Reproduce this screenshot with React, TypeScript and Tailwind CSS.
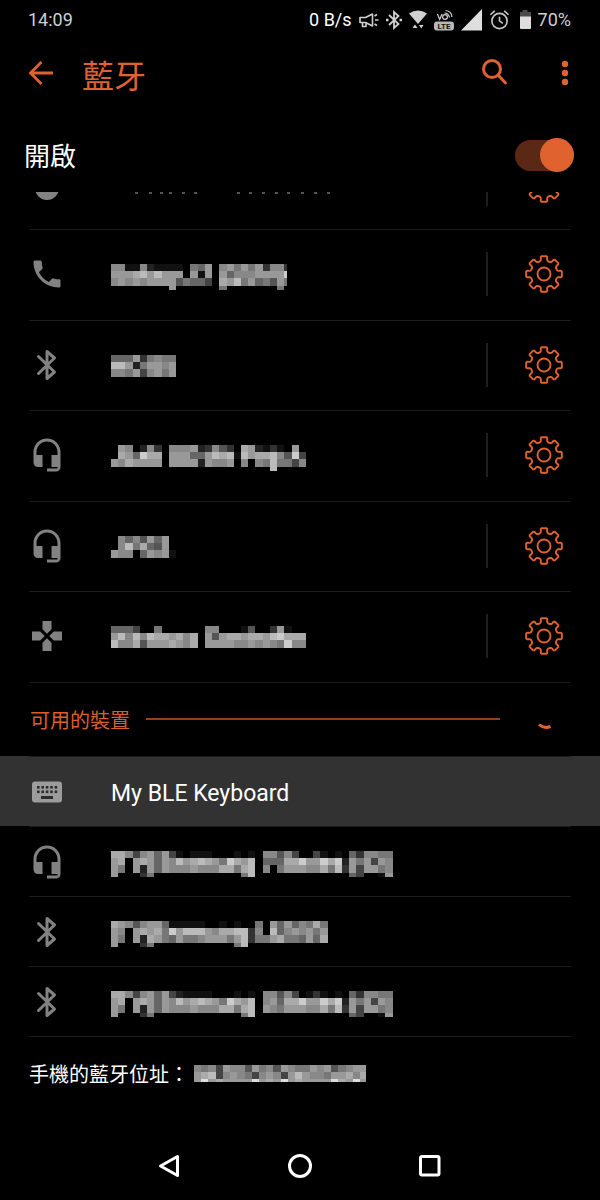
import React, { useState } from "react";

type IconName = "phone" | "bluetooth" | "headset" | "gamepad" | "keyboard";

interface Device {
  id: string;
  icon: IconName;
  name?: string;
  // rows of grey levels (hex digits), one digit for each mosaic block
  mosaic?: string[];
  width?: number;
}

const BLOCK = 7.22;

const pairedDevices: Device[] = [
  {
    id: "p1",
    icon: "phone",
    width: 176,
    mosaic: [
      "8811821111076908979793883",
      "999ab9b99909190968889999c",
      "898989999576640a9b7967597",
      "000000009000000700000007",
    ],
  },
  {
    id: "p2",
    icon: "bluetooth",
    width: 66,
    mosaic: ["666937877", "bb9279989", "887948979"],
  },
  {
    id: "p3",
    icon: "headset",
    width: 195,
    mosaic: [
      "098028308889238530a92131090",
      "0a96caa0999669bab1b9aab85c4",
      "98a9999099992988908087b7748",
      "0000000000000000000000b",
    ],
  },
  {
    id: "p4",
    icon: "headset",
    width: 66,
    mosaic: ["08685969", "08b7a659", "988069891"],
  },
  {
    id: "p5",
    icon: "gamepad",
    width: 195,
    mosaic: [
      "666400700000088000150039100",
      "9b8b8baa9a8a0959aa9aa9bcaaa",
      "b88a5999a98a099998898987c88",
    ],
  },
];

const tvName = [
  "aa8489694101110001010885840041010638877",
  "9a09a9698b9aba97ca9b0666aac99cac2979498",
  "970929698889888aa7ab080799988a7b3949978",
  "9000370000000000007b0000000000000640019",
];

const availableDevices: Device[] = [
  { id: "a1", icon: "keyboard", name: "My BLE Keyboard" },
  { id: "a2", icon: "headset", width: 282, mosaic: tvName },
  {
    id: "a3",
    icon: "bluetooth",
    width: 217,
    mosaic: [
      "a985899611111001010070969687a7",
      "9809a9a7c9bbb98aabb380b6898979",
      "97092a976977899979b3779a77696a",
      "900037000000000007b",
    ],
  },
  {
    id: "a4",
    icon: "bluetooth",
    width: 282,
    mosaic: [
      "aa8489694211110001010885840131010638877",
      "9a09a9698b9aba97ca9b0896aac99cac2979498",
      "970929698889888aa7ab098799988a7b3949978",
      "9000370000000000007b0000000000000640019",
    ],
  },
];

const addressMosaic = [
  "878498859785987798957899",
  "9ab48987489849b988799a8a",
  "9d9a9999d9a9d9a9999da9d9",
];

interface MosaicProps {
  rows: string[];
  width: number;
  height: number;
  label: string;
}

function Mosaic({ rows, width, height, label }: MosaicProps) {
  return (
    <svg width={width} height={height} role="img" aria-label={label} shapeRendering="crispEdges" className="block">
      {rows.map((row, y) =>
        row.split("").map((level, x) =>
          level === "0" ? null : (
            <rect
              key={`${x}-${y}`}
              x={x * BLOCK}
              y={y * BLOCK}
              width={BLOCK}
              height={BLOCK}
              fill={`#${level.repeat(6)}`}
            />
          )
        )
      )}
    </svg>
  );
}

function DeviceMosaic({ device, label }: { device: Device; label: string }) {
  const rows = device.mosaic ?? [];
  // the fourth row holds only the descenders
  return <Mosaic rows={rows} width={device.width ?? 0} height={rows.length > 3 ? 26 : 22} label={label} />;
}

function DeviceIcon({ name }: { name: IconName }) {
  if (name === "bluetooth") {
    return (
      <svg viewBox="0 0 36 36" className="size-9 shrink-0" fill="none" stroke="#828282" strokeWidth="3" strokeLinecap="round" strokeLinejoin="round">
        <path d="M9.5 9.5 25.5 25l-7.5 6.500v-27l7.500 6.500L9.5 26.500" />
      </svg>
    );
  }
  if (name === "keyboard") {
    return (
      <svg viewBox="0 0 36 36" className="size-9 shrink-0">
        <rect x="3" y="7.5" width="30" height="21" rx="3" fill="#9c9c9c" />
        <g fill="#2c2c2c">
          {[8, 12.4, 16.8, 21.2, 25.6].map((x) => (
            <g key={x}>
              <rect x={x} y="12" width="2.6" height="2.6" />
              <rect x={x} y="16.5" width="2.6" height="2.6" />
            </g>
          ))}
          <rect x="12" y="22" width="12" height="3" />
        </g>
      </svg>
    );
  }
  const paths = {
    phone:
      "M6.62 10.79c1.44 2.83 3.76 5.14 6.59 6.59l2.2-2.2c.27-.27.67-.36 1.02-.24 1.12.37 2.33.57 3.57.57.55 0 1 .45 1 1V20c0 .55-.45 1-1 1-9.39 0-17-7.61-17-17 0-.55.45-1 1-1h3.5c.55 0 1 .45 1 1 0 1.25.2 2.45.57 3.57.11.35.03.74-.25 1.02l-2.2 2.2z",
    headset:
      "M12 1c-4.97 0-9 4.03-9 9v7c0 1.66 1.34 3 3 3h3v-8H5v-2c0-3.87 3.13-7 7-7s7 3.13 7 7v2h-4v8h4v1h-7v2h6c1.66 0 3-1.34 3-3V10c0-4.97-4.03-9-9-9z",
    gamepad:
      "M15 7.5V2H9v5.5l3 3 3-3zM7.5 9H2v6h5.5l3-3-3-3zM9 16.5V22h6v-5.5l-3-3-3 3zM16.5 9l-3 3 3 3H22V9h-5.5z",
  };
  return (
    <svg viewBox="0 0 24 24" className="size-9 shrink-0" fill="#828282">
      <path d={paths[name]} />
    </svg>
  );
}

// eight teeth: root, tip, tip, root
const gearPoints = Array.from({ length: 8 })
  .flatMap((_, i) =>
    [
      [-18, 13.4],
      [-14, 14],
      [-12, 15],
      [-11, 17.2],
      [-8, 18],
      [8, 18],
      [11, 17.2],
      [12, 15],
      [14, 14],
      [18, 13.4],
    ].map(([offset, radius]) => {
      const angle = ((i * 45 + offset) * Math.PI) / 180;
      return `${(20 + radius * Math.sin(angle)).toFixed(2)},${(20 - radius * Math.cos(angle)).toFixed(2)}`;
    })
  )
  .join(" ");

function SettingsButton() {
  return (
    <div className="flex items-center">
      <div className="h-11 w-0.5 bg-[#1f1f1f]" />
      <button aria-label="裝置設定" className="ml-9 mr-[7px]">
        <svg viewBox="0 0 40 40" className="block size-10" fill="none" stroke="#e0622f" strokeWidth="1.9" strokeLinejoin="round">
          <polygon points={gearPoints} />
          <circle cx="20" cy="20" r="6.5" />
        </svg>
      </button>
    </div>
  );
}

function StatusIcons() {
  return (
    <>
      <svg width="20" height="20" viewBox="0 0 20 20" fill="none" stroke="#d0d0d0" strokeWidth="1.6" strokeLinejoin="round">
        <path d="M1 7.5h5.5L13.500 4v12L6.500 12.500H1zM3.500 12.500V16.500h3.500v-4M15.500 6l2.500-1.500M16 10h3.500M15.500 14l2.500 1.500" />
      </svg>
      <svg width="16" height="20" viewBox="0 0 16 20" fill="none" stroke="#d0d0d0" strokeWidth="1.800">
        <path d="M3 5 12.500 14 8 18V2l4.500 4L3 15" />
        <path d="M0 10h2.500M13.500 10H16" strokeWidth="2.400" />
      </svg>
      <svg width="18" height="20" viewBox="0 0 18 20" fill="#d0d0d0">
        <path d="M0 3.500Q9-2.500 18 3.500L9 14zM3.500 18l2.500-3.500 2.500 3.500zM10 15h4.500l-2.200 3.500z" />
      </svg>
      <svg width="20" height="22" viewBox="0 0 20 22" fill="none" stroke="#d0d0d0" strokeWidth="1.200">
        <path d="m3.500 5 2.200 5.500L8 5" />
        <circle cx="11" cy="8" r="2.400" />
        <path d="M10.500 4q4 0 5 4.500M11.500 1.500q6 .5 6.500 6.500" />
        <rect x="0" y="12.500" width="20" height="9" rx="3" fill="#b8b8b8" stroke="none" />
        <text x="10" y="20" textAnchor="middle" fontSize="8" fontWeight="700" fill="#111" stroke="none">
          LTE
        </text>
      </svg>
      <svg width="21" height="22" viewBox="0 0 21 22" fill="#dedede">
        <path d="M21 0v21.500H0z" />
      </svg>
      <svg width="21" height="22" viewBox="0 0 22 22" fill="none" stroke="#c8c8c8" strokeWidth="1.700">
        <circle cx="11" cy="12" r="8" />
        <path d="M11 7.500V12l3.500 2.500M1.500 5.500 6 1.500M20.500 5.500 16 1.500" />
      </svg>
      <svg width="14" height="20" viewBox="0 0 14 20">
        <path d="M5.500 0h5v2H14v5H3V2h2.500z" fill="#4a4a4a" />
        <path d="M3 6.500h11V18q0 1-1 1H4q-1 0-1-1z" fill="#dedede" />
      </svg>
    </>
  );
}

const App: React.FC = () => {
  const [enabled, setEnabled] = useState(true);

  return (
    <div className="flex min-h-screen flex-col bg-black font-[Roboto,'Noto_Sans_CJK_TC',sans-serif] text-white">
      {/* Status bar */}
      <div className="flex h-10 items-center justify-between pl-7 pr-[29px] text-lg text-[#cfcfcf]">
        <span>14:09</span>
        <div className="flex items-center gap-[7px]">
          <span className="text-white">0 B/s</span>
          <StatusIcons />
          <span>70%</span>
        </div>
      </div>

      {/* App bar */}
      <header className="flex h-[68px] items-center pl-6 pr-5 text-[#e0622f]">
        <button aria-label="返回">
          <svg viewBox="0 0 34 34" className="block size-[34px]" fill="none" stroke="currentColor" strokeWidth="2.800">
            <path d="M29 16H7M17.500 5 6.500 16l11 11" />
          </svg>
        </button>
        <h1 className="ml-6 flex-1 pt-1.5 text-[32px] leading-10">藍牙</h1>
        <button aria-label="搜尋" className="mr-[38px]">
          <svg viewBox="0 0 32 32" className="block size-8" fill="none" stroke="currentColor" strokeWidth="3" strokeLinecap="round">
            <circle cx="12" cy="11" r="8.500" />
            <path d="m18.500 17.500 7 7.500" />
          </svg>
        </button>
        <button aria-label="更多選項">
          <svg viewBox="0 0 30 30" className="block size-[30px]" fill="currentColor">
            <circle cx="15" cy="5" r="3.200" />
            <circle cx="15" cy="14" r="3.200" />
            <circle cx="15" cy="23" r="3.200" />
          </svg>
        </button>
      </header>

      <label className="mt-2.5 flex h-[74px] items-center justify-between pl-6 pr-[26px]">
        <span className="pt-1 text-[26px] leading-8">開啟</span>
        <input type="checkbox" className="peer sr-only" checked={enabled} onChange={() => setEnabled(!enabled)} />
        <span className="flex h-[31px] w-[59px] items-center rounded-full bg-[#333333] peer-checked:justify-end peer-checked:bg-[#5a2815]">
          <span className="size-[34px] shrink-0 rounded-full bg-[#e0622f]" />
        </span>
      </label>

      {/* Row scrolled half under the switch */}
      <div className="mx-[29px] flex h-[38px] items-end overflow-hidden border-b border-[#1c1c1c]">
        <div className="flex h-[91px] flex-1 items-center">
          <svg viewBox="0 0 36 36" className="size-9 shrink-0" fill="#828282">
            <circle cx="18" cy="22" r="12" />
          </svg>
          <svg width="240" height="20" viewBox="0 0 240 20" className="ml-[46px] flex-none" fill="#555555">
            {[25, 39, 50, 59, 72, 84, 127, 139, 152, 165, 177, 191, 204, 217].map((x) => (
              <rect key={x} x={x - 1} y="18" width="3" height="2" />
            ))}
          </svg>
          <div className="ml-auto">
            <SettingsButton />
          </div>
        </div>
      </div>

      {/* Paired devices */}
      <ul className="mx-[29px]">
        {pairedDevices.map((device) => (
          <li key={device.id} className="flex h-[91px] items-center border-b border-[#1c1c1c] pb-0.5 even:h-[90px]">
            <DeviceIcon name={device.icon} />
            <div className="ml-[46px] h-5 flex-1">
              <DeviceMosaic device={device} label="已配對裝置" />
            </div>
            <SettingsButton />
          </li>
        ))}
      </ul>

      {/* Available devices */}
      <div className="flex h-[73px] items-center pb-0.5 pl-[30px] pr-[29px]">
        <h2 className="pt-1 text-xl text-[#d95f2e]">可用的裝置</h2>
        <div className="ml-4 h-0.5 flex-1 bg-[#963f1c]" />
        <svg viewBox="0 0 32 32" className="ml-[30px] mr-[9px] size-8" fill="none" stroke="#e0622f" strokeWidth="3">
          <path d="M9 21.500q5 4.500 11.500 2" />
        </svg>
      </div>
      <ul>
        {availableDevices.map((device) => (
          <li key={device.id} className="px-[29px] first:bg-[#323232]">
            <button className="flex h-[70px] w-full items-center border-t border-[#1c1c1c] text-left">
              <DeviceIcon name={device.icon} />
              <span className="ml-[46px] block flex-1">
                {device.name ? (
                  <span className="block pt-1 text-[23px] leading-8">{device.name}</span>
                ) : (
                  <span className="block h-[22px]">
                    <DeviceMosaic device={device} label="可用的裝置" />
                  </span>
                )}
              </span>
            </button>
          </li>
        ))}
      </ul>
      <div className="mx-[29px] flex h-[74px] items-center border-t border-[#1c1c1c]">
        <span className="pt-0.5 text-xl">手機的藍牙位址：</span>
        <div className="ml-[5px]">
          <Mosaic rows={addressMosaic} width={172} height={17} label="藍牙位址" />
        </div>
      </div>

      {/* Navigation bar */}
      <nav className="mt-auto flex h-[69px] items-center justify-center">
        <button aria-label="返回" className="flex w-[130px] justify-center">
          <svg width="26" height="26" viewBox="0 0 26 26" fill="none" stroke="white" strokeWidth="3" strokeLinejoin="round">
            <path d="M20.500 3.500v19L3.500 13z" />
          </svg>
        </button>
        <button aria-label="首頁" className="flex w-[130px] justify-center">
          <svg width="26" height="26" viewBox="0 0 26 26" fill="none" stroke="white" strokeWidth="3">
            <circle cx="13" cy="13" r="10.500" />
          </svg>
        </button>
        <button aria-label="最近使用" className="flex w-[130px] justify-center">
          <svg width="26" height="26" viewBox="0 0 26 26" fill="none" stroke="white" strokeWidth="3">
            <rect x="3.500" y="3.500" width="18.500" height="18.500" rx="1.500" />
          </svg>
        </button>
      </nav>
    </div>
  );
};

export default App;
